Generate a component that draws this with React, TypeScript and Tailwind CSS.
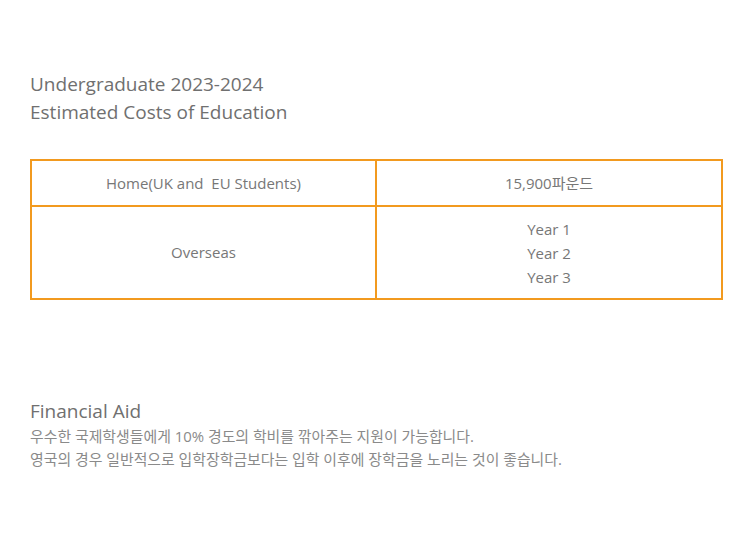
import React from "react";

export default function App() {
  const font = { fontFamily: '"Open Sans", "Noto Sans CJK KR", sans-serif' };
  return (
    <div className="w-[751px] h-[555px] bg-white text-[#777777]" style={font}>
      <div className="pt-[70px] pl-[30px] pr-[28px]">
        <h1 className="text-[19px] leading-[28px] font-normal text-[#707070]">
          Undergraduate 2023-2024
          <br />
          Estimated Costs of Education
        </h1>
        <div className="mt-[33px] border-2 border-[#f29a1f] w-[693px] text-[15px]">
          <div className="flex h-[46px] border-b-2 border-[#f29a1f]">
            <div className="w-[345px] border-r-2 border-[#f29a1f] flex items-center justify-center whitespace-pre">
              Home(UK and  EU Students)
            </div>
            <div className="flex-1 flex items-center justify-center">15,900파운드</div>
          </div>
          <div className="flex h-[91px]">
            <div className="w-[345px] border-r-2 border-[#f29a1f] flex items-center justify-center">
              Overseas
            </div>
            <div className="flex-1 flex flex-col items-center justify-center leading-[24px]">
              <div>Year 1</div>
              <div>Year 2</div>
              <div>Year 3</div>
            </div>
          </div>
        </div>
        <h2 className="mt-[97px] text-[19px] leading-[28px] font-normal text-[#707070]">Financial Aid</h2>
        <p className="text-[14.9px] leading-[23px] text-[#8a8a8a]">
          우수한 국제학생들에게 10% 경도의 학비를 깎아주는 지원이 가능합니다.
          <br />
          영국의 경우 일반적으로 입학장학금보다는 입학 이후에 장학금을 노리는 것이 좋습니다.
        </p>
      </div>
    </div>
  );
}
